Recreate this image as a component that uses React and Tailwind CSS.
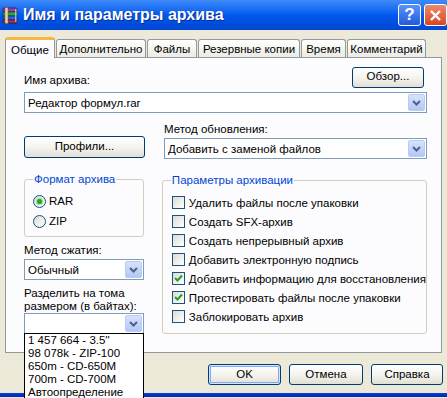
import React from "react";

const FONT = "font-['Liberation_Sans',Arial,sans-serif]";

function RarIcon() {
  return (
    <svg width="17" height="17" viewBox="0 0 17 17">
      <rect x="1" y="1" width="14" height="4" rx="1" fill="#9A3DB8" stroke="#3A1450" strokeWidth="0.8" />
      <rect x="1" y="5" width="14" height="4" rx="1" fill="#2FA84A" stroke="#124A20" strokeWidth="0.8" />
      <rect x="1" y="9" width="14" height="4" rx="1" fill="#2E62E0" stroke="#112A6A" strokeWidth="0.8" />
      <rect x="1" y="13" width="14" height="3" rx="1" fill="#B8334A" stroke="#4A1020" strokeWidth="0.8" />
      <rect x="3" y="0.5" width="3" height="16" fill="#E8D9A8" stroke="#6A5A30" strokeWidth="0.6" />
      <rect x="13" y="2" width="1.5" height="13" fill="#F2F2F2" opacity="0.6" />
    </svg>
  );
}

function Chevron() {
  return (
    <div className="flex h-[17px] w-[17px] items-center justify-center rounded-[2px] border border-[#B9CBF4] bg-linear-to-b from-[#D6E2FD] to-[#B4C8F7]">
      <svg width="9" height="6" viewBox="0 0 9 6">
        <path d="M1 1 L4.5 4.5 L8 1" fill="none" stroke="#4D6185" strokeWidth="2" />
      </svg>
    </div>
  );
}

function Combo({ value, className = "" }) {
  return (
    <div className={`flex h-[21px] items-center border border-[#7F9DB9] bg-white pl-[3px] pr-[1px] ${className}`}>
      <span className="flex-1 truncate leading-[14px]">{value}</span>
      <Chevron />
    </div>
  );
}

function XpButton({ children, className = "", isDefault = false }) {
  return (
    <div
      className={`flex items-center justify-center rounded-[3px] border border-[#003C74] bg-linear-to-b from-white via-[#F5F4EF] to-[#E2DFD4] ${
        isDefault ? "shadow-[inset_0_0_0_1px_#CEE7FF,inset_0_0_0_2px_#8AA6EC]" : ""
      } ${className}`}
    >
      {children}
    </div>
  );
}

function Radio({ checked, label }) {
  return (
    <div className="flex h-[20px] items-center">
      <div className="flex h-[13px] w-[13px] items-center justify-center rounded-full border border-[#1C5180] bg-linear-to-br from-[#DCDCD5] to-white">
        {checked && <div className="h-[5px] w-[5px] rounded-full bg-[#2BA52B] shadow-[0_0_1px_1px_#8EE08E]" />}
      </div>
      <span className="ml-[3px] leading-[14px]">{label}</span>
    </div>
  );
}

function Check({ checked, label }) {
  return (
    <div className="flex h-[19px] items-center">
      <div className="flex h-[13px] w-[13px] shrink-0 items-center justify-center border border-[#1C5180] bg-linear-to-br from-[#DCDCD5] to-white">
        {checked && (
          <svg width="9" height="9" viewBox="0 0 9 9">
            <path d="M1 4 L3.5 6.5 L8 1.5" fill="none" stroke="#21A121" strokeWidth="2" />
          </svg>
        )}
      </div>
      <span className="ml-[4px] whitespace-nowrap leading-[14px]">{label}</span>
    </div>
  );
}

const tabs = [
  { label: "Дополнительно", w: "w-[90px]" },
  { label: "Файлы", w: "w-[50px]" },
  { label: "Резервные копии", w: "w-[102px]" },
  { label: "Время", w: "w-[45px]" },
  { label: "Комментарий", w: "w-[79px]" },
];

const options = [
  { label: "Удалить файлы после упаковки", checked: false },
  { label: "Создать SFX-архив", checked: false },
  { label: "Создать непрерывный архив", checked: false },
  { label: "Добавить электронную подпись", checked: false },
  { label: "Добавить информацию для восстановления", checked: true },
  { label: "Протестировать файлы после упаковки", checked: true },
  { label: "Заблокировать архив", checked: false },
];

const sizes = [
  "1 457 664 - 3.5''",
  "98 078k - ZIP-100",
  "650m - CD-650M",
  "700m - CD-700M",
  "Автоопределение",
];

export default function App() {
  return (
    <div className={`relative h-[398px] w-[447px] overflow-hidden bg-[#ECE9D8] text-[11.5px] text-black ${FONT}`}>
      {/* Title bar */}
      <div className="flex h-[30px] items-center bg-linear-to-b from-[#3D8BFA] via-[#0058EE] to-[#0047D2] pl-[2px]">
        <RarIcon />
        <span className="ml-[4px] text-[16px] font-bold text-white [text-shadow:1px_1px_0_#0B2A8A]">
          Имя и параметры архива
        </span>
        <div className="ml-auto flex items-center gap-[3px]">
          <div className="flex h-[22px] w-[23px] items-center justify-center rounded-[3px] border border-white bg-linear-to-b from-[#5B93FA] to-[#2459DC] text-[17px] font-bold text-white">
            ?
          </div>
          <div className="flex h-[22px] w-[23px] items-center justify-center rounded-[3px] border border-white bg-linear-to-b from-[#EB8A6A] to-[#D6451F]">
            <svg width="13" height="13" viewBox="0 0 13 13">
              <path d="M2 2 L11 11 M11 2 L2 11" stroke="white" strokeWidth="2.4" />
            </svg>
          </div>
        </div>
      </div>

      {/* Tabs */}
      <div className="mt-[7px] ml-[5px] flex h-[20px] items-end">
        <div className="relative z-10 mb-[-1px] flex h-[21px] w-[50px] items-start justify-center rounded-t-[3px] border-x border-t-[3px] border-x-[#919B9C] border-t-[#F6B73D] bg-[#FCFCFE] pt-[3px] leading-[14px]">
          Общие
        </div>
        {tabs.map((t) => (
          <div
            key={t.label}
            className={`ml-[1px] flex h-[18px] items-center justify-center rounded-t-[3px] border-x border-t border-[#919B9C] bg-linear-to-b from-white to-[#ECEBE5] leading-[14px] whitespace-nowrap ${t.w}`}
          >
            {t.label}
          </div>
        ))}
      </div>

      {/* Panel */}
      <div className="ml-[5px] h-[296px] w-[437px] border border-[#919B9C] bg-[#FCFCFE] pl-[18px] pr-[14px] pt-[9px]">
        <div className="flex h-[20px] items-center justify-between">
          <span className="pt-[6px] leading-[14px]">Имя архива:</span>
          <XpButton className="mr-[3px] h-[21px] w-[72px]">Обзор...</XpButton>
        </div>
        <Combo value="Редактор формул.rar" className="mt-[5px]" />

        <div className="mt-[9px] flex">
          <div className="w-[121px] pt-[14px]">
            <XpButton className="h-[22px]">Профили...</XpButton>
          </div>
          <div className="ml-[19px] flex-1">
            <div className="leading-[14px]">Метод обновления:</div>
            <Combo value="Добавить с заменой файлов" className="mt-[2px]" />
          </div>
        </div>

        <div className="flex">
          <div className="w-[122px]">
            <fieldset className="mt-[13px] rounded-[3px] border border-[#D0D0BF] pb-[5px] pl-[8px]">
              <legend className="px-[1px] leading-[14px] text-[#0046D5]">Формат архива</legend>
              <div className="pt-[5px]">
                <Radio checked label="RAR" />
                <Radio label="ZIP" />
              </div>
            </fieldset>
            <div className="mt-[6px] leading-[14px]">Метод сжатия:</div>
            <Combo value="Обычный" className="mt-[2px]" />
            <div className="mt-[7px] leading-[13px] whitespace-nowrap">
              Разделить на тома
              <br />
              размером (в байтах):
            </div>
            <div className="relative">
              <Combo value="" />
              <div className="absolute left-0 top-[20px] z-20 w-full border border-black bg-white pl-[3px]">
                {sizes.map((s) => (
                  <div key={s} className="h-[13px] leading-[13px] whitespace-nowrap">
                    {s}
                  </div>
                ))}
              </div>
            </div>
          </div>

          <fieldset className="ml-[18px] mt-[14px] flex-1 rounded-[3px] border border-[#D0D0BF] pb-[5px] pl-[9px]">
            <legend className="-ml-[1px] px-[1px] leading-[14px] text-[#0046D5]">Параметры архивации</legend>
            <div className="pt-[6px]">
              {options.map((o) => (
                <Check key={o.label} checked={o.checked} label={o.label} />
              ))}
            </div>
          </fieldset>
        </div>
      </div>

      {/* Bottom buttons */}
      <div className="mt-[11px] flex justify-end gap-[8px] pr-[4px]">
        <XpButton isDefault className="h-[21px] w-[73px]">OK</XpButton>
        <XpButton className="h-[21px] w-[74px]">Отмена</XpButton>
        <XpButton className="h-[21px] w-[72px]">Справка</XpButton>
      </div>

      <div className="mt-[8px] h-[4px] bg-linear-to-b from-[#0B3FD6] to-[#0029B0]" />
    </div>
  );
}
